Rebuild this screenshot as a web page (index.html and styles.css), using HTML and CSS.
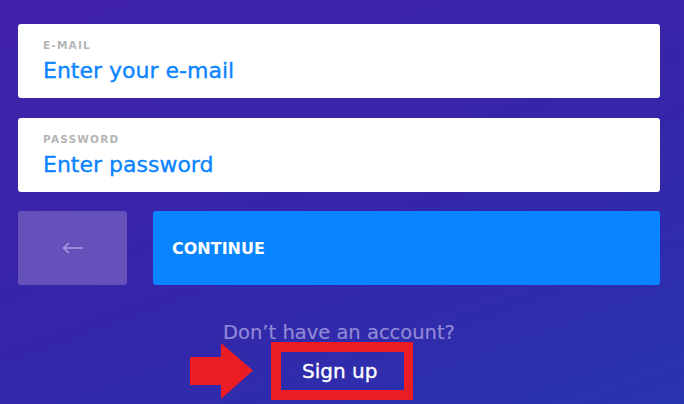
FILE: index.html
```html
<!DOCTYPE html>
<html>
<head>
<meta charset="utf-8">
<link rel="stylesheet" href="styles.css">
</head>
<body>
<div class="form">
  <label class="field">
    <span class="label">E-MAIL</span>
    <span class="placeholder">Enter your e-mail</span>
  </label>
  <label class="field">
    <span class="label">PASSWORD</span>
    <span class="placeholder">Enter password</span>
  </label>
  <div class="actions">
    <div class="back">
      <svg width="22" height="12" viewBox="0 0 22 12"><path d="M21 6H2M7 1L1.5 6L7 11" fill="none" stroke="#a99fe0" stroke-width="1.5"/></svg>
    </div>
    <div class="continue">CONTINUE</div>
  </div>
  <div class="footer">
    <div class="question">Don’t have an account?</div>
    <div class="signup-row">
      <svg class="red-arrow" width="63" height="56" viewBox="0 0 63 56"><path d="M0 14H31V0L63 27.5L31 56V42H0Z" fill="#ec1c24"/></svg>
      <div class="signup">Sign up</div>
    </div>
  </div>
</div>
</body>
</html>
```
FILE: styles.css
```css
html, body {
  margin: 0;
  height: 100%;
}
body {
  background: linear-gradient(160deg, #4121aa 0%, #3526a9 55%, #2834ae 100%);
  font-family: "DejaVu Sans", "Noto Sans", sans-serif;
  overflow: hidden;
}
.form {
  display: flex;
  flex-direction: column;
  width: 642px;
  margin-left: 18px;
  padding-top: 24px;
}
.field {
  display: flex;
  flex-direction: column;
  height: 74px;
  box-sizing: border-box;
  background: #fff;
  border-radius: 3px;
  padding: 15px 0 0 25px;
  margin-bottom: 20px;
}
.label {
  font-size: 10.5px;
  font-weight: 700;
  letter-spacing: 1.2px;
  color: #b5b5b5;
  line-height: 13px;
}
.placeholder {
  font-size: 22px;
  color: #0a84ff;
  line-height: 26px;
  margin-top: 6px;
  -webkit-text-stroke: 0.35px #0a84ff;
}
.actions {
  display: flex;
  gap: 26px;
  height: 74px;
  margin-top: -1px;
}
.back {
  width: 109px;
  background: #6651bb;
  border-radius: 3px;
  display: flex;
  align-items: center;
  justify-content: center;
}
.continue {
  flex: 1;
  background: #0784fe;
  border-radius: 3px;
  color: #fff;
  font-weight: 700;
  font-size: 16px;
  display: flex;
  align-items: center;
  padding-left: 19px;
}
.footer {
  display: flex;
  flex-direction: column;
  align-items: center;
  margin-top: 35px;
}
.question {
  font-size: 19.5px;
  color: #9289d6;
  line-height: 26px;
  -webkit-text-stroke: 0.2px #9289d6;
}
.signup-row {
  display: flex;
  align-items: flex-start;
  gap: 18px;
  margin-left: -75px;
  margin-top: -4px;
}
.red-arrow {
  margin-top: 1px;
}
.signup {
  border: 10px solid #ec1c24;
  border-right-width: 9px;
  width: 102px;
  height: 38px;
  line-height: 38px;
  padding-left: 21px;
  color: #fff;
  font-size: 20px;
  white-space: nowrap;
  -webkit-text-stroke: 0.35px #fff;
}
```
